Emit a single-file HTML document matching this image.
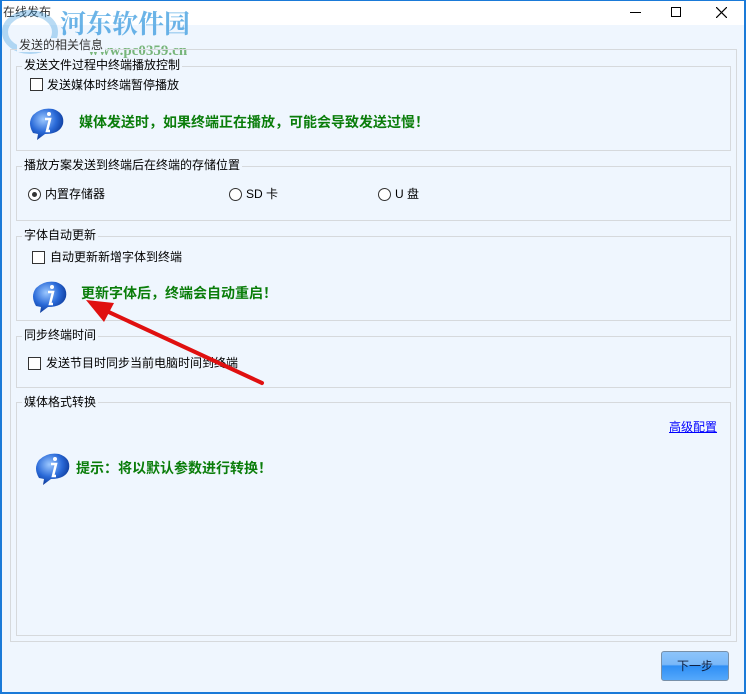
<!DOCTYPE html>
<html><head><meta charset="utf-8"><style>
*{margin:0;padding:0;box-sizing:border-box}
body{width:746px;height:694px;overflow:hidden;background:#eff6fe;font-family:"Liberation Sans","Noto Sans CJK SC",sans-serif;font-size:12px;color:#000;position:relative}
.abs{position:absolute}
.frame{position:absolute;left:0;top:0;width:746px;height:694px;border:2px solid #1a7ad8;border-top:1px solid #1a7ad8;pointer-events:none}
.title{position:absolute;left:0;top:0;width:746px;height:25px;background:#fff}
.box{position:absolute;border:1px solid #d6d9dc}
.lbl{position:absolute;background:#eff6fe;padding:0 2px;font-size:12px;line-height:14px;white-space:nowrap}
.cb{position:absolute;width:13px;height:13px;border:1px solid #333;background:#fff}
.t{position:absolute;font-size:12px;line-height:14px;white-space:nowrap}
.g{position:absolute;color:#0a7d0a;font-weight:bold;font-size:14px;line-height:16px;white-space:nowrap}
.rd{position:absolute;width:13px;height:13px;border:1px solid #333;border-radius:50%;background:#fff}
</style></head><body>
<div class="title"></div>
<div class="t" style="left:3px;top:5px;color:#333">在线发布</div>
<div class="abs" style="left:630px;top:12px;width:11px;height:1px;background:#000"></div>
<div class="abs" style="left:671px;top:7px;width:10px;height:10px;border:1px solid #000"></div>
<svg class="abs" style="left:716px;top:7px" width="11" height="11"><path d="M0 0L11 11M11 0L0 11" stroke="#000" stroke-width="1.2"/></svg>
<div class="abs" style="left:60px;top:8px;font-size:26px;font-weight:bold;color:#3a9be0;opacity:.75;font-family:'Noto Serif CJK SC',serif;line-height:30px">河东软件园</div>
<div class="abs" style="left:88px;top:43px;font-size:15px;font-weight:bold;color:#5aa55a;opacity:.8;font-family:'Liberation Serif',serif">www.pc0359.cn</div>
<svg class="abs" style="left:2px;top:10px;opacity:.35" width="56" height="44"><ellipse cx="28" cy="22" rx="25" ry="19" fill="none" stroke="#3a9be0" stroke-width="6"/></svg>

<div class="box" style="left:10px;top:49px;width:727px;height:593px"></div>
<div class="lbl" style="left:17px;top:38px;color:#333">发送的相关信息</div>

<div class="box" style="left:16px;top:66px;width:715px;height:85px"></div>
<div class="lbl" style="left:22px;top:58px">发送文件过程中终端播放控制</div>
<div class="cb" style="left:30px;top:78px"></div>
<div class="t" style="left:47px;top:78px">发送媒体时终端暂停播放</div>
<svg class="abs" style="left:27px;top:107px" width="40" height="34"><defs><radialGradient id="a" cx="40%" cy="35%" r="65%"><stop offset="0" stop-color="#9cc8ff"/><stop offset=".6" stop-color="#2a6ad8"/><stop offset="1" stop-color="#0d3a9a"/></radialGradient></defs><path d="M6 26 Q0 16 6 8 Q14 0 26 2 Q38 6 36 17 Q33 27 18 27 L10 33 L11 27 Z" fill="url(#a)"/><circle cx="22" cy="7" r="2" fill="#fff"/><path d="M18 12h5l-3 12h3" stroke="#fff" stroke-width="2.5" fill="none"/></svg>
<div class="g" style="left:79px;top:114px">媒体发送时，如果终端正在播放，可能会导致发送过慢！</div>

<div class="box" style="left:16px;top:166px;width:715px;height:55px"></div>
<div class="lbl" style="left:22px;top:158px">播放方案发送到终端后在终端的存储位置</div>
<div class="rd" style="left:28px;top:188px"></div><div class="abs" style="left:32px;top:192px;width:5px;height:5px;border-radius:50%;background:#333"></div>
<div class="t" style="left:45px;top:187px">内置存储器</div>
<div class="rd" style="left:229px;top:188px"></div><div class="t" style="left:246px;top:187px">SD 卡</div>
<div class="rd" style="left:378px;top:188px"></div><div class="t" style="left:395px;top:187px">U 盘</div>

<div class="box" style="left:16px;top:236px;width:715px;height:85px"></div>
<div class="lbl" style="left:22px;top:228px">字体自动更新</div>
<div class="cb" style="left:32px;top:251px"></div>
<div class="t" style="left:50px;top:250px">自动更新新增字体到终端</div>
<svg class="abs" style="left:30px;top:280px" width="40" height="34"><path d="M6 26 Q0 16 6 8 Q14 0 26 2 Q38 6 36 17 Q33 27 18 27 L10 33 L11 27 Z" fill="url(#a)"/><circle cx="22" cy="7" r="2" fill="#fff"/><path d="M18 12h5l-3 12h3" stroke="#fff" stroke-width="2.5" fill="none"/></svg>
<div class="g" style="left:81px;top:285px">更新字体后，终端会自动重启！</div>

<div class="box" style="left:16px;top:336px;width:715px;height:52px"></div>
<div class="lbl" style="left:22px;top:328px">同步终端时间</div>
<div class="cb" style="left:28px;top:357px"></div>
<div class="t" style="left:46px;top:356px">发送节目时同步当前电脑时间到终端</div>

<div class="box" style="left:16px;top:402px;width:715px;height:234px"></div>
<div class="lbl" style="left:22px;top:395px">媒体格式转换</div>
<div class="t" style="left:669px;top:420px;color:#00f;text-decoration:underline">高级配置</div>
<svg class="abs" style="left:33px;top:452px" width="40" height="34"><path d="M6 26 Q0 16 6 8 Q14 0 26 2 Q38 6 36 17 Q33 27 18 27 L10 33 L11 27 Z" fill="url(#a)"/><circle cx="22" cy="7" r="2" fill="#fff"/><path d="M18 12h5l-3 12h3" stroke="#fff" stroke-width="2.5" fill="none"/></svg>
<div class="g" style="left:76px;top:460px">提示：将以默认参数进行转换！</div>

<svg class="abs" style="left:80px;top:290px" width="190" height="100"><path d="M182 93 L20 18" stroke="#e01010" stroke-width="4" stroke-linecap="round"/><path d="M6 10 L34 13 L24 32 Z" fill="#e01010"/></svg>

<div class="abs" style="left:661px;top:651px;width:68px;height:30px;border:1px solid #7890a8;border-radius:3px;background:linear-gradient(#8cc4fb 0%,#7ab8f8 45%,#2f8ff5 50%,#55a8fb 100%);text-align:center;line-height:28px;font-size:12px;color:#102040">下一步</div>
<div class="frame"></div>
</body></html>
